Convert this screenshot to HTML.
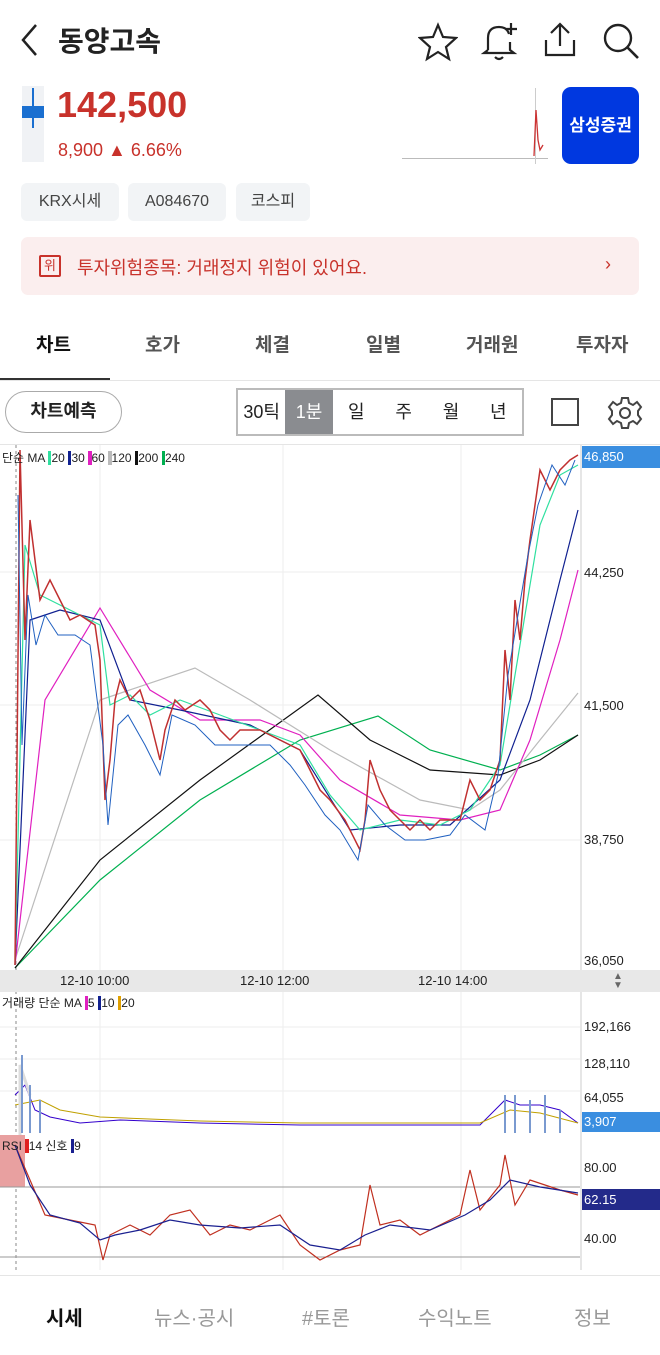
<!DOCTYPE html>
<html><head><meta charset="utf-8"><style>
*{margin:0;padding:0;box-sizing:border-box}
body{width:660px;height:1355px;background:#fff;font-family:"Liberation Sans","Noto Sans CJK KR",sans-serif;position:relative;overflow:hidden;color:#222}
.a{position:absolute}
.chip{position:absolute;top:183px;height:38px;background:#f2f4f6;border-radius:6px;font-size:16px;color:#444;line-height:38px;text-align:center}
.tab{position:absolute;top:330px;font-size:19px;color:#555;font-weight:bold}
.nav{position:absolute;top:1302px;font-size:20px;color:#999}
.pl{position:absolute;right:8px;font-size:13px;color:#333}
</style></head><body>
<svg class="a" style="left:18px;top:22px" width="24" height="36"><path d="M18 3 L5 18 L18 33" fill="none" stroke="#222" stroke-width="2.5"/></svg>
<div class="a" style="left:58px;top:20px;font-size:28px;font-weight:bold">동양고속</div>
<svg class="a" style="left:418px;top:22px" width="40" height="40"><path d="M20 3 L25 15 L38 16 L28 25 L31 37 L20 30 L9 37 L12 25 L2 16 L15 15 Z" fill="none" stroke="#222" stroke-width="2.2"/></svg>
<svg class="a" style="left:480px;top:20px" width="40" height="42"><path d="M8 30 L8 18 Q8 7 19 7 Q27 7 29 14 M30 22 L30 30 L34 33 L4 33 L8 30 M15 37 Q19 41 23 37" fill="none" stroke="#222" stroke-width="2.2"/><path d="M31 3 V15 M25 9 H37" stroke="#222" stroke-width="2.2"/></svg>
<svg class="a" style="left:540px;top:20px" width="40" height="40"><path d="M20 4 V26 M11 13 L20 4 L29 13 M6 20 V35 H34 V20" fill="none" stroke="#222" stroke-width="2.2"/></svg>
<svg class="a" style="left:600px;top:20px" width="42" height="42"><circle cx="18" cy="18" r="13" fill="none" stroke="#222" stroke-width="2.4"/><path d="M27 27 L38 38" stroke="#222" stroke-width="2.6"/></svg>

<div class="a" style="left:22px;top:86px;width:22px;height:76px;background:#f0f2f5"></div>
<div class="a" style="left:32px;top:88px;width:2px;height:40px;background:#1a6fd0"></div>
<div class="a" style="left:22px;top:106px;width:22px;height:12px;background:#1a6fd0"></div>
<div class="a" style="left:57px;top:84px;font-size:36px;font-weight:bold;color:#c8322b">142,500</div>
<div class="a" style="left:58px;top:140px;font-size:18px;color:#c8322b">8,900 ▲ 6.66%</div>
<div class="a" style="left:402px;top:158px;width:146px;height:1px;background:#bbb"></div>
<div class="a" style="left:535px;top:88px;width:1px;height:76px;background:#ccc"></div>
<svg class="a" style="left:530px;top:100px" width="20" height="60"><path d="M4 56 L6 10 L8 40 L10 50 L13 45" fill="none" stroke="#c33" stroke-width="1.3"/></svg>
<div class="a" style="left:562px;top:87px;width:77px;height:77px;background:#0038e0;border-radius:9px;color:#fff;font-size:17px;font-weight:bold;line-height:77px;text-align:center">삼성증권</div>

<div class="chip" style="left:21px;width:98px">KRX시세</div>
<div class="chip" style="left:128px;width:98px">A084670</div>
<div class="chip" style="left:236px;width:74px">코스피</div>

<div class="a" style="left:21px;top:237px;width:618px;height:58px;background:#fbeeee;border-radius:7px"></div>
<div class="a" style="left:39px;top:255px;width:22px;height:22px;border:2px solid #c8322b;border-radius:2px;color:#c8322b;font-size:13px;text-align:center;line-height:18px">위</div>
<div class="a" style="left:77px;top:254px;font-size:18px;color:#c8322b">투자위험종목: 거래정지 위험이 있어요.</div>
<div class="a" style="left:605px;top:254px;font-size:18px;color:#c8322b">›</div>

<div class="tab" style="left:36px;color:#111">차트</div>
<div class="tab" style="left:145px">호가</div>
<div class="tab" style="left:255px">체결</div>
<div class="tab" style="left:366px">일별</div>
<div class="tab" style="left:466px">거래원</div>
<div class="tab" style="left:576px">투자자</div>
<div class="a" style="left:0;top:378px;width:110px;height:3px;background:#333"></div>
<div class="a" style="left:0;top:380px;width:660px;height:1px;background:#e5e5e5"></div>

<div class="a" style="left:5px;top:391px;width:117px;height:42px;border:1.5px solid #aaa;border-radius:21px;font-size:18px;font-weight:bold;text-align:center;line-height:39px">차트예측</div>
<div class="a" style="left:236px;top:388px;width:288px;height:48px;border:2px solid #bbb;display:flex;font-size:18px">
<div style="width:48px;text-align:center;line-height:44px">30틱</div>
<div style="width:48px;text-align:center;line-height:44px;background:#8a8c90;color:#fff">1분</div>
<div style="width:48px;text-align:center;line-height:44px">일</div>
<div style="width:48px;text-align:center;line-height:44px">주</div>
<div style="width:48px;text-align:center;line-height:44px">월</div>
<div style="width:48px;text-align:center;line-height:44px">년</div></div>
<div class="a" style="left:551px;top:398px;width:28px;height:28px;border:2px solid #444"></div>
<svg class="a" style="left:607px;top:395px" width="36" height="36"><circle cx="18" cy="18" r="5" fill="none" stroke="#444" stroke-width="2"/><path d="M15 3 H21 L22 8 L26 10 L30 7 L34 12 L31 16 L31 20 L34 24 L30 29 L26 26 L22 28 L21 33 H15 L14 28 L10 26 L6 29 L2 24 L5 20 L5 16 L2 12 L6 7 L10 10 L14 8 Z" fill="none" stroke="#444" stroke-width="2"/></svg>

<div class="a" style="left:0;top:444px;width:660px;height:1px;background:#e5e5e5"></div>
<svg class="a" style="left:0;top:445px" width="660" height="830">
<g stroke="#eee" stroke-width="1">
<line x1="100" y1="0" x2="100" y2="825"/><line x1="283" y1="0" x2="283" y2="825"/><line x1="461" y1="0" x2="461" y2="825"/>
<line x1="0" y1="127" x2="580" y2="127"/><line x1="0" y1="260" x2="580" y2="260"/><line x1="0" y1="395" x2="580" y2="395"/>
<line x1="0" y1="582" x2="580" y2="582"/><line x1="0" y1="614" x2="580" y2="614"/><line x1="0" y1="646" x2="580" y2="646"/></g>
<line x1="16" y1="0" x2="16" y2="825" stroke="#888" stroke-dasharray="3,3"/>
<line x1="581" y1="0" x2="581" y2="825" stroke="#ccc"/>
<rect x="0" y="525" width="660" height="22" fill="#e8e8e8"/>
<g fill="none" stroke-width="1.2">
<polyline stroke="#00b050" points="15,523 100,435 200,355 300,295 378,271 430,305 500,325 540,310 578,290"/>
<polyline stroke="#111" points="15,523 100,415 200,335 318,250 370,295 430,325 500,330 540,315 578,290"/>
<polyline stroke="#bbb" points="15,515 100,255 195,223 250,255 330,305 420,355 470,365 500,345 540,295 578,248"/>
<polyline stroke="#e020c0" points="15,520 45,255 100,163 150,245 200,275 260,275 300,290 340,335 400,370 460,375 500,365 530,295 560,195 578,125"/>
<polyline stroke="#102090" points="15,520 30,175 60,165 100,175 130,255 180,265 250,280 300,305 350,385 400,380 450,380 500,335 530,255 560,135 578,65"/>
<polyline stroke="#30e0a0" points="15,520 25,100 40,150 60,160 100,180 110,260 130,250 150,270 180,255 220,270 260,285 300,300 330,350 360,385 400,375 440,380 470,365 500,320 520,200 540,80 560,30 578,20"/>
<polyline stroke="#c03030" stroke-width="1.5" points="15,520 20,5 25,195 30,75 40,155 50,135 60,155 70,175 80,170 95,180 100,215 105,355 110,315 115,255 120,235 130,255 140,245 150,275 160,315 165,285 175,255 185,265 200,255 210,265 220,285 230,295 240,285 260,285 280,295 300,305 310,325 320,345 330,355 345,375 360,405 365,375 370,315 380,345 390,365 400,375 410,385 420,375 430,385 440,375 460,375 470,335 480,355 490,345 500,315 505,205 510,255 515,155 520,195 525,135 530,95 540,25 550,45 560,25 570,15 578,10"/>
<polyline stroke="#2060c0" stroke-width="1" points="18,50 22,300 28,150 36,200 45,170 58,190 75,190 90,200 103,300 108,380 118,280 128,270 145,300 160,330 172,270 195,280 215,300 240,300 270,300 290,320 305,340 325,370 340,385 358,415 368,360 385,380 405,395 425,395 450,390 465,370 485,385 498,330 508,230 518,170 528,110 538,60 552,20 565,40 575,15"/>
</g>
<g fill="none" stroke-width="1">
<polyline stroke="#30c" points="15,650 25,640 35,665 50,672 80,678 120,675 200,678 300,680 400,680 480,680 505,655 520,660 540,660 560,665 578,678"/>
<polyline stroke="#c0a000" points="15,660 40,655 60,665 100,672 200,676 300,678 480,678 510,665 540,668 578,678"/>
<polyline stroke="#ddd" stroke-width="3" points="20,690 20,620 30,650"/>
</g>
<g stroke="#7a9ad0" stroke-width="2">
<line x1="22" y1="688" x2="22" y2="610"/><line x1="30" y1="688" x2="30" y2="640"/><line x1="40" y1="688" x2="40" y2="655"/>
<line x1="505" y1="688" x2="505" y2="650"/><line x1="515" y1="688" x2="515" y2="650"/><line x1="530" y1="688" x2="530" y2="655"/><line x1="545" y1="688" x2="545" y2="650"/><line x1="560" y1="688" x2="560" y2="665"/></g>
<rect x="0" y="690" width="25" height="52" fill="#e8a0a0"/>
<line x1="0" y1="742" x2="580" y2="742" stroke="#999"/>
<line x1="0" y1="812" x2="580" y2="812" stroke="#999"/>
<polyline fill="none" stroke="#c03020" stroke-width="1.2" points="15,700 30,735 45,770 70,775 95,780 103,815 110,790 130,780 150,790 170,770 190,765 210,790 230,780 250,785 280,770 300,800 320,815 340,805 360,800 370,740 380,780 400,775 420,790 440,780 460,770 470,725 480,765 500,740 505,710 515,760 530,735 545,740 560,745 578,750"/>
<polyline fill="none" stroke="#1a2090" stroke-width="1.2" points="15,700 30,740 50,770 80,778 100,795 115,790 140,785 170,775 200,780 240,783 280,780 310,800 340,805 365,790 390,780 430,785 465,770 490,755 510,735 540,742 578,748"/>
</svg>
<div class="a" style="left:2px;top:449px;font-size:12px">단순 MA <span style="background:#30e0a0">&nbsp;</span>20 <span style="background:#102090">&nbsp;</span>30 <span style="background:#e020c0">&nbsp;</span>60 <span style="background:#bbb">&nbsp;</span>120 <span style="background:#111">&nbsp;</span>200 <span style="background:#00b050">&nbsp;</span>240</div>
<div class="a" style="left:582px;top:446px;width:78px;height:22px;background:#3a8ee0;color:#fff;font-size:13px;line-height:22px;padding-left:2px">46,850</div>
<div class="a" style="left:584px;top:565px;font-size:13px">44,250</div>
<div class="a" style="left:584px;top:698px;font-size:13px">41,500</div>
<div class="a" style="left:584px;top:832px;font-size:13px">38,750</div>
<div class="a" style="left:584px;top:953px;font-size:13px">36,050</div>
<div class="a" style="left:60px;top:973px;font-size:13px">12-10 10:00</div>
<div class="a" style="left:240px;top:973px;font-size:13px">12-10 12:00</div>
<div class="a" style="left:418px;top:973px;font-size:13px">12-10 14:00</div>
<div class="a" style="left:613px;top:972px;font-size:10px;color:#666;line-height:9px">▲<br>▼</div>
<div class="a" style="left:2px;top:994px;font-size:12px">거래량 단순 MA <span style="background:#e020c0">&nbsp;</span>5 <span style="background:#102090">&nbsp;</span>10 <span style="background:#e0a000">&nbsp;</span>20</div>
<div class="a" style="left:584px;top:1019px;font-size:13px">192,166</div>
<div class="a" style="left:584px;top:1056px;font-size:13px">128,110</div>
<div class="a" style="left:584px;top:1090px;font-size:13px">64,055</div>
<div class="a" style="left:582px;top:1112px;width:78px;height:20px;background:#3a8ee0;color:#fff;font-size:13px;line-height:20px;padding-left:2px">3,907</div>
<div class="a" style="left:2px;top:1137px;font-size:12px">RSI <span style="background:#e02020">&nbsp;</span>14 신호 <span style="background:#1a2090">&nbsp;</span>9</div>
<div class="a" style="left:584px;top:1160px;font-size:13px">80.00</div>
<div class="a" style="left:582px;top:1189px;width:78px;height:21px;background:#232a8a;color:#fff;font-size:13px;line-height:21px;padding-left:2px">62.15</div>
<div class="a" style="left:584px;top:1231px;font-size:13px">40.00</div>

<div class="a" style="left:0;top:1275px;width:660px;height:1px;background:#e5e5e5"></div>
<div class="nav" style="left:46px;color:#111;font-weight:bold">시세</div>
<div class="nav" style="left:154px">뉴스·공시</div>
<div class="nav" style="left:302px">#토론</div>
<div class="nav" style="left:418px">수익노트</div>
<div class="nav" style="left:574px">정보</div>
</body></html>
